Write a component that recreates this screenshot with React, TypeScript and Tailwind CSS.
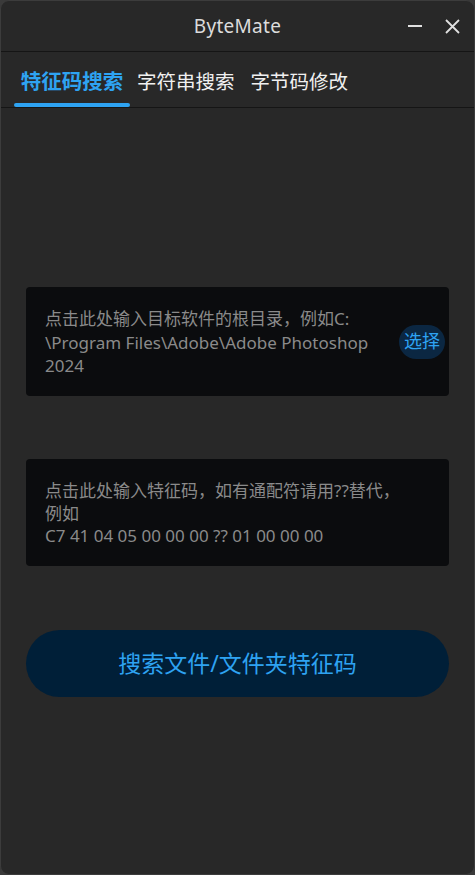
const font = { fontFamily: '"Noto Sans", "Noto Sans CJK SC", sans-serif' };

export default function App() {
  return (
    <div className="w-[475px] h-[875px] bg-[#3a3a3a]" style={font}>
      <div className="flex flex-col w-full h-full bg-[#282828] rounded-[9px] border border-[#3c3c3c] overflow-hidden">
        {/* Title bar */}
        <header className="relative h-[51px] flex items-center justify-center border-b border-[#151515] shrink-0">
          <span className="text-[19px] text-[#dcdcdc] tracking-[0.3px]">ByteMate</span>
          <div className="absolute right-[13px] top-0 h-full flex items-center gap-[22px]">
            <div className="w-[14px] h-[2px] bg-[#e0e0e0]" />
            <svg width="17" height="17" viewBox="0 0 17 17" className="text-[#e0e0e0]">
              <path d="M2 2 L15 15 M15 2 L2 15" stroke="currentColor" strokeWidth="1.8" />
            </svg>
          </div>
        </header>

        {/* Tabs */}
        <nav className="flex items-end h-[56px] px-[12px] border-b border-[#151515] shrink-0">
          <div className="flex flex-col items-center w-[118px]">
            <span className="text-[20.5px] font-bold text-[#2ea3f2] leading-none pb-[12px]">特征码搜索</span>
            <div className="w-[116px] h-[4px] rounded-full bg-[#2ea3f2]" />
          </div>
          <span className="text-[19.5px] text-[#f0f0f0] leading-none pb-[16px] ml-[6px]">字符串搜索</span>
          <span className="text-[19.5px] text-[#f0f0f0] leading-none pb-[16px] ml-[16px]">字节码修改</span>
        </nav>

        {/* Content */}
        <main className="flex-1 flex flex-col px-[25px] pt-[179px]">
          <div className="flex items-center h-[109px] bg-[#0b0c0e] rounded-[4px] pl-[19px] pr-[4px]">
            <p className="flex-1 text-[17px] leading-[23.5px] text-[#8a8a8a] pt-[2px]">
              点击此处输入目标软件的根目录，例如C:
              <br />
              \Program Files\Adobe\Adobe Photoshop
              <br />
              2024
            </p>
            <button className="h-[34px] px-[5px] rounded-full bg-[#0b2742] text-[18px] text-[#2ea3f2]">
              选择
            </button>
          </div>

          <div className="flex items-center h-[107px] mt-[63px] bg-[#0b0c0e] rounded-[4px] pl-[19px] pr-[10px]">
            <p className="text-[17px] leading-[22.5px] text-[#8a8a8a] pt-[3px]">
              点击此处输入特征码，如有通配符请用??替代，
              <br />
              例如
              <br />
              C7 41 04 05 00 00 00 ?? 01 00 00 00
            </p>
          </div>

          <button className="h-[67px] mt-[64px] rounded-full bg-[#001f38] text-[23px] text-[#2ea3f2]">
            搜索文件/文件夹特征码
          </button>
        </main>
      </div>
    </div>
  );
}
